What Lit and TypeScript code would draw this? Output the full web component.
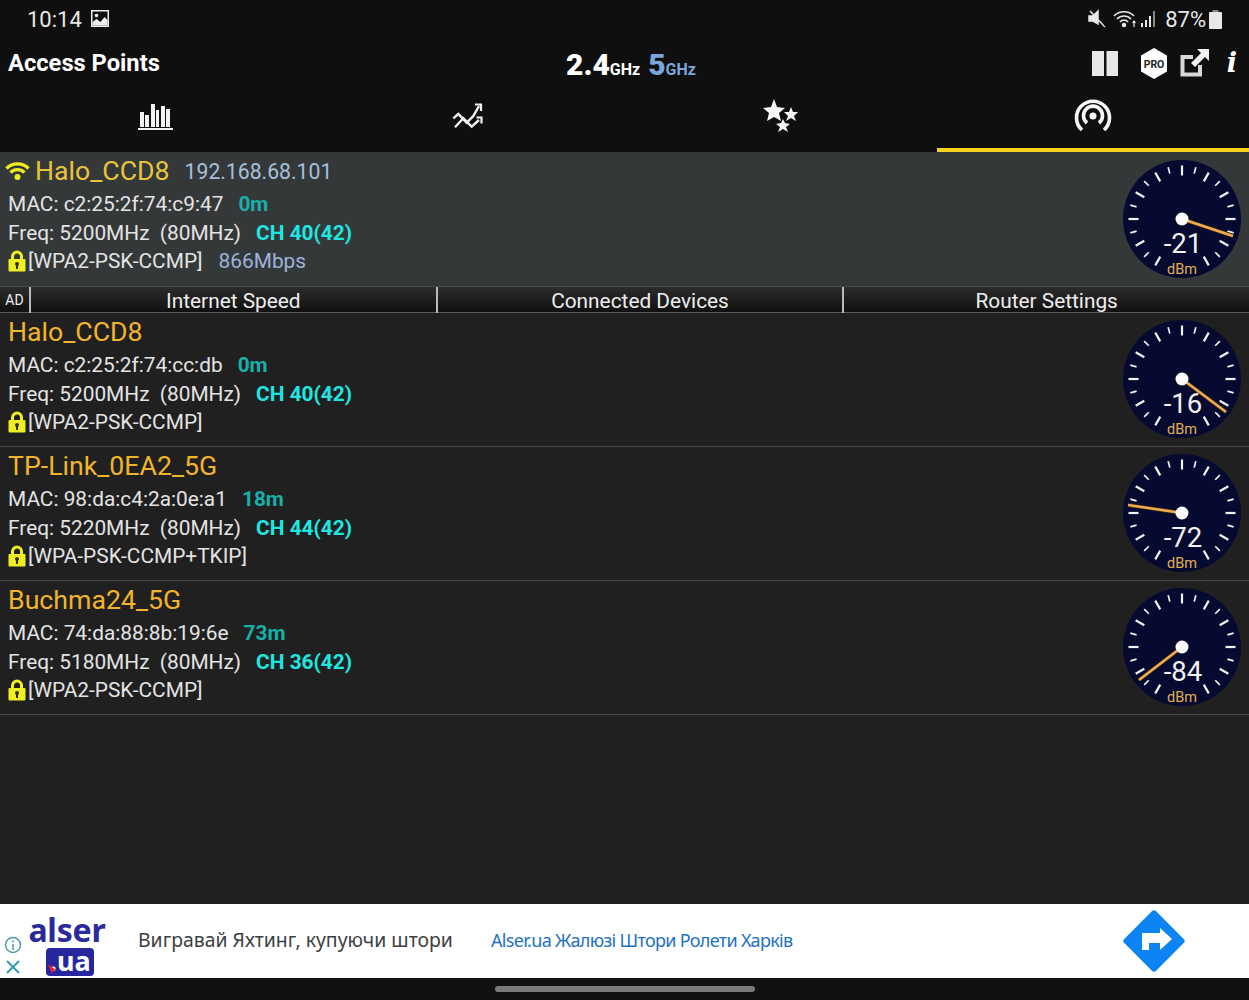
import { LitElement, html, css, svg } from "lit";
import { customElement } from "lit/decorators.js";

interface Ap {
  name: string; ip?: string; mac: string; dist: string; freq: string; ch: string; sec: string; rate?: string; dbm: number; end: [number, number]; selected?: boolean;
}

const APS: Ap[] = [
  { name: "Halo_CCD8", ip: "192.168.68.101", mac: "c2:25:2f:74:c9:47", dist: "0m", freq: "5200MHz", ch: "CH 40(42)", sec: "[WPA2-PSK-CCMP]", rate: "866Mbps", dbm: -21, end: [51, 17], selected: true },
  { name: "Halo_CCD8", mac: "c2:25:2f:74:cc:db", dist: "0m", freq: "5200MHz", ch: "CH 40(42)", sec: "[WPA2-PSK-CCMP]", dbm: -16, end: [44, 33] },
  { name: "TP-Link_0EA2_5G", mac: "98:da:c4:2a:0e:a1", dist: "18m", freq: "5220MHz", ch: "CH 44(42)", sec: "[WPA-PSK-CCMP+TKIP]", dbm: -72, end: [-54, -8] },
  { name: "Buchma24_5G", mac: "74:da:88:8b:19:6e", dist: "73m", freq: "5180MHz", ch: "CH 36(42)", sec: "[WPA2-PSK-CCMP]", dbm: -84, end: [-43, 33] },
];

const ticks = () => {
  const out = [];
  for (let a = -150; a <= 150; a += 15) {
    const long = a % 30 === 0;
    const r = (a * Math.PI) / 180;
    const o = 53.5;
    const i = long ? 43.5 : 47;
    const s = Math.sin(r), c = -Math.cos(r);
    out.push(svg`<line x1=${s * i} y1=${c * i} x2=${s * o} y2=${c * o} stroke="#f2f2f2" stroke-width=${long ? 2.2 : 1.7}></line>`);
  }
  return out;
};

const gauge = (dbm: number, end: [number, number]) => html`
  <svg class="gauge" viewBox="-60 -60 120 120" width="120" height="120">
    <circle r="59" fill="#060a30"></circle>
    ${ticks()}
    <line x1="0" y1="0" x2=${end[0]} y2=${end[1]} stroke="#3a2a10" stroke-width="4"></line>
    <line x1="0" y1="0" x2=${end[0]} y2=${end[1]} stroke="#f2aa52" stroke-width="2.6"></line>
    <circle r="6.5" fill="#fff"></circle>
    <text class="g-val" x="1" y="34" text-anchor="middle">${dbm}</text>
    <text class="g-unit" x="0" y="55" text-anchor="middle">dBm</text>
  </svg>`;

const lock = html`<svg class="lock" viewBox="0 0 18 22" width="18" height="22">
  <path d="M4.500 10V6.500a4.500 4.500 0 0 1 9 0V10" fill="none" stroke="#eeee22" stroke-width="3"></path>
  <rect x="0.500" y="9" width="17" height="12.500" rx="1" fill="#eeee22"></rect>
  <circle cx="9" cy="14" r="2" fill="#303010"></circle><rect x="8" y="14" width="2" height="5" fill="#303010"></rect>
</svg>`;

@customElement("app-root")
export class AppRoot extends LitElement {
  static styles = css`
    :host { display: block; width: 1249px; height: 1000px; font-family: Roboto, "Liberation Sans", sans-serif; background: #202020; color: #eee; overflow: hidden; }
    .page { display: flex; flex-direction: column; height: 1000px; }
    .head { background: #0f0f0f; height: 152px; flex: none; display: flex; flex-direction: column; }
    .status { height: 38px; display: flex; align-items: center; padding: 0 0 0 27px; color: #e8e8e8; font-size: 22px; }
    .status svg { display: block; }
    .status .img { margin-left: 9px; margin-top: -2px; }
    .status .right { margin-left: auto; display: flex; align-items: center; padding-right: 27px; }
    .status .pct { font-size: 22px; margin-left: 8px; }
    .titlebar { height: 50px; display: flex; align-items: center; }
    .title { width: 566px; padding-left: 8px; box-sizing: border-box; font-size: 23.7px; font-weight: 700; color: #fff; margin-top: -1px; }
    .freq { font-weight: 700; display: flex; align-items: baseline; gap: 8px; color: #fff; font-size: 16px; margin-top: 2px; }
    .freq b { font-size: 30px; }
    .freq .five { color: #7aa6da; }
    .actions { margin-left: auto; display: flex; align-items: center; padding-right: 5px; }
    .actions svg { display: block; }
    .info-btn { width: 24px; margin-left: 11px; text-align: center; font-family: "DejaVu Serif", serif; font-style: italic; font-weight: 700; font-size: 27px; line-height: 32px; color: #fff; }
    .tabs { flex: 1; display: grid; grid-template-columns: repeat(4, 1fr); }
    .tab { display: flex; align-items: center; justify-content: center; padding-bottom: 8px; box-sizing: border-box; }
    .tab.on { border-bottom: 4px solid #f5d31f; padding-bottom: 4px; }
    .list { flex: 1; }
    .ap { height: 134px; box-sizing: border-box; display: flex; border-bottom: 1px solid #4a4a4a; padding: 0 7px 0 8px; align-items: flex-start; }
    .ap.sel { background: #343838; border-bottom: 0; }
    .info { flex: 1; display: flex; flex-direction: column; padding-top: 1px; font-size: 20.85px; }
    .line { display: flex; align-items: center; white-space: pre; height: 29px; color: #e4e4e4; }
    .line.name { font-size: 26.7px; color: #f2b52a; height: 36px; white-space: nowrap; }
    .line.sec { height: 27px; }
    .sel .line.name { color: #e8c43c; }
    .ip { color: #a6c0dc; font-size: 21.2px; margin-left: 15px; }
    .wifi { margin-left: -3px; margin-right: 5px; flex: none; }
    .dist { color: #17b0a8; font-weight: 700; margin-left: 15px; }
    .ch { color: #1fe6e0; font-weight: 700; margin-left: 15px; }
    .rate { color: #9db4dc; margin-left: 16px; }
    .lock { margin-right: 2px; display: block; flex: none; }
    .gauge { flex: none; display: block; align-self: center; margin-top: -1px; }
    .g-val { font-size: 27.5px; fill: #f2f2f2; font-family: Roboto, sans-serif; }
    .g-unit { font-size: 14.5px; fill: #e0b050; font-family: Roboto, sans-serif; }
    .adrow { height: 27px; box-sizing: border-box; display: grid; grid-template-columns: 29px 1fr 1fr 1fr; border-top: 1px solid #484c4c; border-bottom: 1px solid #5a5a5a; background: linear-gradient(#2c2c2c, #101010); }
    .adrow > div { display: flex; align-items: center; justify-content: center; font-size: 20.85px; color: #eee; border-left: 2px solid #bbb; box-sizing: border-box; padding-top: 2px; }
    .adrow > div:first-child { border-left: 0; font-size: 14px; padding-top: 0; }
    .ad { height: 74px; flex: none; background: #fff; display: flex; align-items: center; position: relative; }
    .adchoice { width: 26px; flex: none; display: flex; flex-direction: column; align-items: center; align-self: flex-end; gap: 5px; padding-bottom: 3px; }
    .logo { width: 84px; flex: none; display: flex; flex-direction: column; align-items: center; font-family: "Noto Sans", sans-serif; font-weight: 700; color: #2a2a9c; line-height: 1; margin: 10px 0 0 2px; }
    .logo .a { font-size: 32px; line-height: 28px; letter-spacing: -0.2px; margin-left: -6px; }
    .logo .b { background: #26269e; color: #fff; font-size: 27px; line-height: 26px; width: 48px; height: 28px; border-radius: 4px; text-align: center; position: relative; margin-top: 4px; }
    .logo .dot { position: absolute; left: 2px; top: 16px; width: 8px; height: 10px; background: #e8202c; clip-path: polygon(0 0, 100% 60%, 60% 70%, 50% 100%); }
    .adtext { margin: -4px 0 0 26px; width: 353px; font-size: 19.4px; color: #3c4043; font-family: "Noto Sans", sans-serif; white-space: nowrap; }
    .adlink { margin-top: -2px; font-size: 18px; color: #2272c3; font-family: "Noto Sans", sans-serif; white-space: nowrap; letter-spacing: -0.68px; }
    .go { position: absolute; right: 63px; top: 5px; display: block; }
    .nav { flex: none; height: 22px; background: #111; display: flex; justify-content: center; padding-top: 8px; box-sizing: border-box; }
    .pill { width: 260px; height: 6px; border-radius: 3px; background: #7a7a7a; }
  `;

  private renderAp(a: Ap) {
    return html`<div class="ap ${a.selected ? "sel" : ""}">
      <div class="info">
        <div class="line name">
          ${a.selected ? html`<svg class="wifi" width="25" height="20" viewBox="0 0 25 20">
            <path d="M1.500 7.500a15.500 15.500 0 0 1 22 0M5.500 11.500a10 10 0 0 1 14 0" fill="none" stroke="#eeee22" stroke-width="3.400"></path>
            <circle cx="12.500" cy="16" r="3" fill="#eeee22"></circle></svg>` : ""}
          ${a.name}${a.ip ? html`<span class="ip">${a.ip}</span>` : ""}
        </div>
        <div class="line">MAC: ${a.mac}<span class="dist">${a.dist}</span></div>
        <div class="line">Freq: ${a.freq}  (80MHz)<span class="ch">${a.ch}</span></div>
        <div class="line sec">${lock}${a.sec}${a.rate ? html`<span class="rate">${a.rate}</span>` : ""}</div>
      </div>
      ${gauge(a.dbm, a.end)}
    </div>`;
  }

  render() {
    return html`<div class="page">
      <div class="head">
        <div class="status">
          <span>10:14</span>
          <svg class="img" width="18" height="17" viewBox="0 0 18 17"><rect width="18" height="17" fill="#eee"></rect><rect x="1.500" y="1.500" width="15" height="14" fill="#0f0f0f"></rect><path d="M1.500 15.500V12l4-3 4 3 4-5 3 3v5.500z" fill="#eee"></path><circle cx="5.500" cy="5.500" r="1.800" fill="#eee"></circle></svg>
          <div class="right">
            <svg width="18" height="20" viewBox="0 0 18 20"><path d="M1 7h4l5-5v13L5 12H1z M2 2l15 16" fill="#e8e8e8" stroke="#e8e8e8" stroke-width="1.500"></path><path d="M12 5l5 12" stroke="#0f0f0f" stroke-width="1"></path></svg>
            <svg style="margin-left:7px" width="26" height="20" viewBox="0 0 26 20" fill="none" stroke="#e8e8e8" stroke-width="1.500"><path d="M1 7a14 14 0 0 1 20 0M4 10a9.500 9.500 0 0 1 14 0M7 13a5 5 0 0 1 8 0"></path><circle cx="11" cy="16" r="1.500" fill="#e8e8e8"></circle><path d="M21 18v-6M19.500 14l1.500-2 1.500 2" stroke-width="1.200"></path></svg>
            <svg style="margin-left:2px" width="16" height="20" viewBox="0 0 16 20"><rect x="0" y="14" width="2" height="4" fill="#e8e8e8"></rect><rect x="4" y="11" width="2" height="7" fill="#e8e8e8"></rect><rect x="8" y="7" width="2" height="11" fill="#e8e8e8"></rect><rect x="12" y="2" width="2" height="16" fill="#888"></rect></svg>
            <span class="pct">87%</span>
            <svg style="margin-left:3px" width="13" height="19" viewBox="0 0 13 19"><rect x="3.500" y="0" width="6" height="3" fill="#888"></rect><rect x="0" y="2" width="13" height="17" rx="1" fill="#e8e8e8"></rect></svg>
          </div>
        </div>
        <div class="titlebar">
          <div class="title">Access Points</div>
          <div class="freq"><span><b>2.4</b>GHz</span><span class="five"><b>5</b>GHz</span></div>
          <div class="actions">
            <svg width="26" height="25" viewBox="0 0 26 25"><rect x="0" y="0" width="12" height="25" fill="#e8e8e8"></rect><rect x="14.500" y="0" width="11.500" height="25" fill="#e8e8e8"></rect></svg>
            <svg style="margin-left:22px" width="28" height="31" viewBox="0 0 28 31"><path d="M14 0l13 7.500v16L14 31 1 23.500v-16z" fill="#fff"></path><text x="14" y="20" text-anchor="middle" font-size="10.500" font-weight="700" fill="#222" font-family="Roboto, sans-serif">PRO</text></svg>
            <svg style="margin-left:12px" width="29" height="28" viewBox="0 0 29 28"><path d="M17 0h12v12l-4-4-10 10-4-4 10-10z" fill="#f2f2f2"></path><path d="M13 8H2.500v17.500H20V16" fill="none" stroke="#d8d8d8" stroke-width="4"></path></svg>
            <span class="info-btn">i</span>
          </div>
        </div>
        <div class="tabs">
          <div class="tab">
            <svg width="36" height="28" viewBox="0 0 36 28" fill="#f2f2f2"><rect x="2" y="10" width="4" height="15"></rect><rect x="7" y="13" width="4" height="12"></rect><rect x="13" y="2" width="4" height="23"></rect><rect x="18" y="8" width="3" height="17"></rect><rect x="23" y="4" width="4" height="21"></rect><rect x="28" y="7" width="4" height="18"></rect><rect x="0" y="26" width="35" height="2"></rect></svg>
          </div>
          <div class="tab">
            <svg style="margin-left:-2px" width="32" height="28" viewBox="0 0 32 28" fill="none" stroke="#f2f2f2" stroke-width="2.400"><path d="M2.300 16.300L7.300 12l8.400 8.700 6.600-6.700L28 4"></path><path d="M4 25.300l8.300-9 8.400 8.400L28 18"></path><path d="M24 2.500h6v6.500M25.500 15.500h5v6" stroke-width="2.200"></path></svg>
          </div>
          <div class="tab">
            <svg width="36" height="36" viewBox="0 0 36 36" fill="#f6f6f6"><polygon points="11,1 14,9 22,10 16,15 18,23 11,19 4,23 6,15 0,10 8,9"></polygon><polygon points="28,9 30,14 35,14 31,18 33,23 28,20 23,23 25,18 21,14 26,14"></polygon><polygon points="20,21 22,25 27,26 23,29 25,34 20,31 15,34 17,29 13,26 18,25"></polygon></svg>
          </div>
          <div class="tab on">
            <svg width="38" height="34" viewBox="0 0 38 34" fill="none" stroke="#f6f6f6" stroke-width="3.600"><path d="M8 31a16.500 16.500 0 1 1 22 0"></path><path d="M13 24a9.500 9.500 0 1 1 12 0"></path><circle cx="19" cy="17" r="3.500" fill="#f6f6f6" stroke="none"></circle></svg>
          </div>
        </div>
      </div>
      <div class="list">
        ${this.renderAp(APS[0])}
        <div class="adrow"><div>AD</div><div>Internet Speed</div><div>Connected Devices</div><div>Router Settings</div></div>
        ${APS.slice(1).map((a) => this.renderAp(a))}
      </div>
      <div class="ad">
        <div class="adchoice">
          <svg width="18" height="18" viewBox="0 0 18 18" fill="none" stroke="#4a9aa8" stroke-width="1.500"><circle cx="9" cy="9" r="7.500"></circle><path d="M9 8v6M9 4.500v2"></path></svg>
          <svg width="16" height="16" viewBox="0 0 16 16" fill="none" stroke="#2a9ab0" stroke-width="1.800"><path d="M2 2l12 12M14 2L2 14"></path></svg>
        </div>
        <div class="logo"><span class="a">alser</span><span class="b"><i class="dot"></i>.ua</span></div>
        <div class="adtext">Вигравай Яхтинг, купуючи штори</div>
        <div class="adlink">Alser.ua Жалюзі Штори Ролети Харків</div>
        <svg class="go" width="64" height="64" viewBox="0 0 64 64"><rect x="9.500" y="9.500" width="45" height="45" rx="3" transform="rotate(45 32 32)" fill="#0c84f4"></rect><path d="M20 41V24h18v-5l12 11-12 11v-7H27v7z" fill="#fff"></path></svg>
      </div>
      <div class="nav"><div class="pill"></div></div>
    </div>`;
  }
}
